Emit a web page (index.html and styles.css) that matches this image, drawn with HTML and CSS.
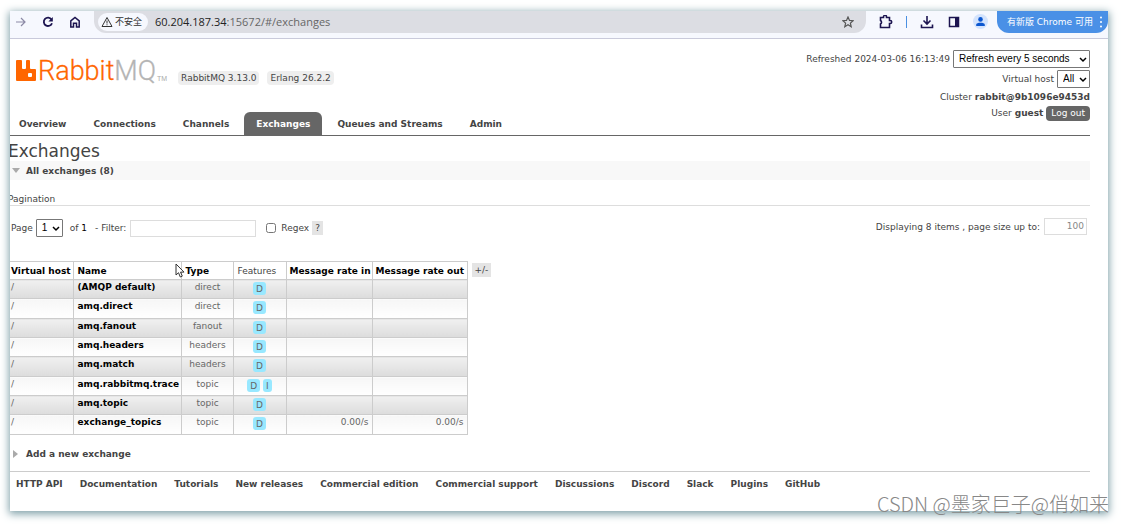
FILE: index.html
```html
<!DOCTYPE html>
<html lang="en">
<head>
<meta charset="utf-8">
<title>RabbitMQ Management</title>
<link rel="stylesheet" href="styles.css">
</head>
<body>
<div class="window">
  <div class="toolbar">
    <div class="nav-buttons">
      <button class="icon-button muted" aria-label="Forward"><svg viewBox="0 0 12 12"><path d="M1 6h9M6 2l4 4-4 4"/></svg></button>
      <button class="icon-button" aria-label="Reload"><svg viewBox="0 0 12 12"><path d="M9.5 3.4A4.2 4.2 0 1 0 10 7.2" stroke-width="1.8"/><path d="M10.8 1v4.4H6.4z" fill="currentColor" stroke="none"/></svg></button>
      <button class="icon-button" aria-label="Home"><svg viewBox="0 0 12 12"><path d="M1.8 4.8 6 1.4l4.2 3.4v6.1H7.5V7.2h-3v3.7H1.8z" stroke-width="1.5"/></svg></button>
    </div>
    <div class="address">
      <span class="security"><svg viewBox="0 0 12 12"><path d="M6 1.5 11 10.500H1z"/><path d="M6 4.500v3M6 8.300v1"/></svg>不安全</span>
      <span class="url"><b>60.204.187.34</b>:15672/#/exchanges</span>
      <button class="icon-button star" aria-label="Bookmark"><svg viewBox="0 0 12 12"><path d="m6 1 1.500 3.400 3.600.3-2.700 2.400.8 3.600L6 8.800l-3.200 1.900.8-3.600L.9 4.700l3.600-.3z"/></svg></button>
    </div>
    <button class="icon-button" aria-label="Extensions"><svg class="large" viewBox="0 0 14 14"><path d="M1.500 2.500h3V1.800a1.500 1.500 0 0 1 3 0v.7h3v3h.7a1.500 1.500 0 0 1 0 3h-.7v4h-9V9a2 2 0 0 0 0-3.500z" stroke-width="1.6"/></svg></button>
    <span class="divider"></span>
    <button class="icon-button" aria-label="Downloads"><svg class="large" viewBox="0 0 14 14"><path d="M7 1v8M3.500 5.500 7 9l3.500-3.500M1.500 9.500v3h11v-3" stroke-width="1.6"/></svg></button>
    <button class="icon-button panel" aria-label="Side panel"><svg viewBox="0 0 12 12"><path d="M1.500 1.500h9v9h-9z" stroke-width="1.500"/><path d="M7 1h4v10H7z" fill="currentColor" stroke="none"/></svg></button>
    <button class="icon-button avatar" aria-label="Profile"><svg viewBox="0 0 12 12"><circle cx="6" cy="3.700" r="2.500"/><path d="M1.300 11V9.500C1.300 6.800 10.700 6.800 10.700 9.500V11z"/></svg></button>
    <button class="update">有新版 Chrome 可用<svg viewBox="0 0 4 14"><circle cx="2" cy="2.500" r="1"/><circle cx="2" cy="7" r="1"/><circle cx="2" cy="11.500" r="1"/></svg></button>
  </div>

  <header class="header">
    <div class="brand">
      <a class="logo" href="#/" aria-label="RabbitMQ"><svg viewBox="0 0 20 21"><path d="M1 0h4q1 0 1 1v7q0 1 1 1h2q1 0 1-1V1q0-1 1-1h2q1 0 1 1v7q0 1 1 1h4q1 0 1 1v10q0 1-1 1H1q-1 0-1-1V1q0-1 1-1z"/><rect class="hole" x="12" y="13" width="4" height="4" rx="1"/></svg><span class="logo-name">Rabbit<span class="logo-mq">MQ</span></span><span class="logo-tm">TM</span></a>
      <span class="version">RabbitMQ 3.13.0</span>
      <span class="version">Erlang 26.2.2</span>
    </div>
    <div class="status">
      <div class="status-row first"><label for="refresh">Refreshed 2024-03-06 16:13:49</label><span class="select refresh"><select id="refresh"><option>Refresh every 5 seconds</option></select><svg viewBox="0 0 8 6"><path d="m1 1 3 3 3-3"/></svg></span></div>
      <div class="status-row second"><label for="vhost">Virtual host</label><span class="select vhost"><select id="vhost"><option>All</option></select><svg viewBox="0 0 8 6"><path d="m1 1 3 3 3-3"/></svg></span></div>
      <div class="status-row">Cluster <b>rabbit@9b1096e9453d</b></div>
      <div class="status-row">User <b>guest</b><button class="logout">Log out</button></div>
    </div>
    <nav class="tabs">
      <a href="#/">Overview</a><a href="#/connections">Connections</a><a href="#/channels">Channels</a><a class="selected" href="#/exchanges">Exchanges</a><a href="#/queues">Queues and Streams</a><a href="#/users">Admin</a>
    </nav>
  </header>

  <main class="main">
    <h1>Exchanges</h1>
    <h2 class="section open"><svg viewBox="0 0 8 6"><path d="M0 0h8L4 5z"/></svg>All exchanges (8)</h2>
    <h3>Pagination</h3>
    <div class="filters">
      <label for="page">Page</label>
      <span class="select page"><select id="page"><option>1</option></select><svg viewBox="0 0 8 6"><path d="m1 1 3 3 3-3"/></svg></span>
      <span class="count">of <span class="total">1</span></span>
      <label for="filter">- Filter:</label>
      <input class="filter" id="filter" type="text">
      <input class="regex" id="regex" type="checkbox">
      <label for="regex">Regex</label>
      <button class="help">?</button>
      <span class="page-size"><label for="size">Displaying 8 items , page size up to:</label><input id="size" type="text" value="100"></span>
    </div>

    <div class="listing">
      <table>
        <colgroup><col class="c-host"><col class="c-name"><col class="c-type"><col class="c-features"><col class="c-in"><col class="c-out"></colgroup>
        <thead><tr><th>Virtual host</th><th>Name</th><th>Type</th><th class="plain">Features</th><th>Message rate in</th><th>Message rate out</th></tr></thead>
        <tbody>
          <tr><td>/</td><td><a href="#/e/default">(AMQP default)</a></td><td>direct</td><td><abbr>D</abbr></td><td></td><td></td></tr>
          <tr><td>/</td><td><a href="#/e/direct">amq.direct</a></td><td>direct</td><td><abbr>D</abbr></td><td></td><td></td></tr>
          <tr><td>/</td><td><a href="#/e/fanout">amq.fanout</a></td><td>fanout</td><td><abbr>D</abbr></td><td></td><td></td></tr>
          <tr><td>/</td><td><a href="#/e/headers">amq.headers</a></td><td>headers</td><td><abbr>D</abbr></td><td></td><td></td></tr>
          <tr><td>/</td><td><a href="#/e/match">amq.match</a></td><td>headers</td><td><abbr>D</abbr></td><td></td><td></td></tr>
          <tr><td>/</td><td><a href="#/e/trace">amq.rabbitmq.trace</a></td><td>topic</td><td><abbr>D</abbr> <abbr>I</abbr></td><td></td><td></td></tr>
          <tr><td>/</td><td><a href="#/e/topic">amq.topic</a></td><td>topic</td><td><abbr>D</abbr></td><td></td><td></td></tr>
          <tr><td>/</td><td><a href="#/e/exchange_topics">exchange_topics</a></td><td>topic</td><td><abbr>D</abbr></td><td>0.00/s</td><td>0.00/s</td></tr>
        </tbody>
      </table>
      <button class="columns">+/-</button>
      <svg class="cursor" viewBox="0 0 10 15"><path d="M1 1v11l2.500-2.300L5.300 14l2-.9-1.800-4H9z"/></svg>
    </div>
    <h2 class="section"><svg viewBox="0 0 8 8"><path d="M1 0v8l5-4z"/></svg>Add a new exchange</h2>
  </main>

  <footer class="footer">
    <a href="#api">HTTP API</a><a href="#docs">Documentation</a><a href="#tutorials">Tutorials</a><a href="#releases">New releases</a><a href="#edition">Commercial edition</a><a href="#support">Commercial support</a><a href="#discussions">Discussions</a><a href="#discord">Discord</a><a href="#slack">Slack</a><a href="#plugins">Plugins</a><a href="#github">GitHub</a>
  </footer>
</div>
<div class="watermark">CSDN @墨家巨子@俏如来</div>
</body>
</html>
```

FILE: styles.css
```css
* { box-sizing: border-box; }

body {
  margin: 0;
  padding: 11px 16px 13px 10px;
  background: #fff;
  color: #444;
  font: 9px/12px "DejaVu Sans", Verdana, "Noto Sans CJK SC", sans-serif;
  position: relative;
}

button, input, select { font: inherit; color: inherit; margin: 0; }
button { border: 0; padding: 0; background: none; }
a { color: inherit; text-decoration: none; font-weight: bold; }
svg { display: block; }

.window {
  min-height: 500px;
  overflow: hidden;
  background: #fff;
}
body::before {
  content: "";
  position: absolute;
  inset: 11px 16px 13px 10px;
  box-shadow: 0 2px 8px 1px #7fa0a8;
  z-index: -1;
}

/* Browser toolbar */
.toolbar {
  display: flex;
  align-items: center;
  height: 28px;
  padding-bottom: 6px;
  background: #f6f8fe;
  border-bottom: 1px solid #c9cadb;
}
.nav-buttons { display: flex; gap: 15px; padding-left: 5px; }
.icon-button { color: #1c1450; }
.icon-button svg { width: 12px; height: 12px; fill: none; stroke: currentColor; stroke-width: 1.2; }
.icon-button svg.large { width: 14px; height: 14px; }
.icon-button.muted { color: #8c8aa6; }
.address {
  flex: 1;
  display: flex;
  align-items: center;
  height: 23px;
  margin: 0 13px 0 13px;
  padding: 0 12px 0 4px;
  background: #dcdde3;
  border-radius: 0 0 12px 12px;
}
.security {
  display: flex;
  align-items: center;
  gap: 2px;
  height: 18px;
  padding: 0 6px 0 3px;
  border-radius: 9px;
  background: #f6f8fe;
  color: #333;
}
.security svg { width: 12px; height: 12px; fill: none; stroke: #333; }
.url { flex: 1; padding-left: 7px; font: 11px/14px "Open Sans", sans-serif; color: #666; }
.url b { font-weight: normal; color: #222; }
.icon-button.star { color: #555; }
.divider { width: 1px; height: 12px; margin: 0 13px 0 13px; background: #4a90e2; }
.icon-button.panel { margin-left: 14px; }
.icon-button.avatar {
  display: grid;
  place-items: center;
  width: 15px;
  height: 15px;
  margin: 0 9px 0 13px;
  border-radius: 50%;
  background: #d3e3fd;
  color: #0b57d0;
}
.avatar svg { width: 11px; height: 11px; fill: currentColor; stroke: none; }
.update {
  display: flex;
  align-items: center;
  gap: 6px;
  height: 23px;
  padding: 0 5px 0 10px;
  border-radius: 0 0 12px 12px;
  background: #4a90e6;
  color: #fff;
}
.update svg { width: 4px; height: 14px; fill: #fff; }

/* Page header */
.header {
  display: grid;
  grid-template-columns: 1fr auto;
  margin-right: 18px;
  height: 97px;
  border-bottom: 1px solid #666;
}
.brand { display: flex; align-items: flex-start; padding: 18px 0 0 6px; }
.logo { display: flex; margin-right: 11px; font-weight: normal; }
.logo svg { width: 20px; height: 21px; margin-top: 3px; fill: #f60; }
.logo .hole { fill: #fff; }
.logo-name { margin-left: 2px; font: 27px/29px Roboto, sans-serif; font-weight: 300; color: #f60; -webkit-text-stroke: 0.3px; }
.logo-mq { color: #b4b4b4; }
.logo-tm { margin: 18px 0 0 1px; font: 7px/8px "Liberation Sans", sans-serif; color: #aaa; }
.version {
  margin: 14px 8px 0 0;
  padding: 1px 3px;
  border-radius: 4px;
  background: #eee;
}
.status { grid-row: span 2; padding-top: 10px; }
.status-row {
  display: flex;
  align-items: center;
  justify-content: flex-end;
  gap: 3px;
  height: 16px;
}
.status-row.first { height: 19px; }
.status-row.second { height: 21px; }
.select { position: relative; display: inline-flex; }
.select select {
  width: 100%;
  height: 18px;
  padding: 0 5px;
  appearance: none;
  border: 1px solid #777;
  border-radius: 1px;
  background: #fff;
  color: #000;
  font: 10px/14px "Liberation Sans", Arial, sans-serif;
}
.select svg {
  position: absolute;
  right: 3px;
  top: 7px;
  width: 8px;
  height: 6px;
  fill: none;
  stroke: #000;
  stroke-width: 1.5;
  pointer-events: none;
}
.refresh { width: 137px; }
.vhost { width: 33px; }
.logout {
  height: 15px;
  padding: 0 5px;
  border-radius: 4px;
  background: #666;
  color: #fff;
}
.tabs { display: flex; align-items: flex-end; gap: 3px; margin-left: -3px; }
.tabs a { height: 23px; padding: 6px 12px 5px; border-radius: 6px 6px 0 0; }
.tabs .selected { background: #666; color: #fff; }

/* Content */
.main { margin-right: 18px; }
h1, h2, h3 { margin: 0; font-weight: normal; }
h1 { margin-left: -2px; padding-top: 5px; font-size: 17px; line-height: 20px; }
.section {
  display: flex;
  align-items: center;
  gap: 6px;
  height: 19px;
  padding-left: 2px;
  font-size: 9px;
  font-weight: bold;
}
.section svg { width: 8px; height: 8px; fill: #aaa; }
.section.open { background: #f8f8f8; }
h3 {
  height: 26px;
  margin-left: -2px;
  padding-top: 13px;
  font-size: 9px;
  border-bottom: 1px solid #ddd;
}
.filters { display: flex; align-items: center; height: 44px; padding-left: 1px; }
.filters .page { width: 27px; margin: 0 7px 0 3px; }
.count { margin-right: 8px; }
.total { color: #000; }
.filters input[type="text"] { height: 17px; border: 1px solid #ddd; background: #fff; }
.filter { width: 126px; margin: 0 10px 0 4px; }
.regex { width: 10px; height: 10px; margin-right: 5px; }
.help, .columns { height: 14px; padding: 0 3px; background: #e4e4e4; }
.help { margin-left: 3px; }
.page-size { margin: 0 3px 4px auto; }
.page-size input { width: 43px; margin-left: 4px; padding: 0 2px; text-align: right; color: #888; }

/* Exchange table */
.listing { position: relative; display: flex; align-items: flex-start; gap: 4px; padding: 11px 0 9px; }
table { table-layout: fixed; width: 457px; border-collapse: collapse; }
.c-host { width: 63px; }
.c-name { width: 108px; }
.c-type { width: 52px; }
.c-features { width: 53px; }
.c-in { width: 86px; }
.c-out { width: 95px; }
th, td { padding: 0 3px 0 4px; border: 1px solid #ccc; text-align: center; white-space: nowrap; }
th:first-child, td:first-child { padding-left: 1px; border-left: 0; text-align: left; }
th { height: 18px; color: #000; text-align: left; }
th:nth-child(n+5) { padding-left: 3px; padding-right: 0; }
th.plain { font-weight: normal; color: #444; }
td { height: 19px; padding-bottom: 5px; color: #666; }
tr:nth-child(3n+2) td { height: 20px; }
tr:nth-child(odd) td { background: linear-gradient(#f0f0f0, #dcdcdc); }
tr:nth-child(even) td { background: linear-gradient(#f6f6f6, #fff); }
td:nth-child(2) { text-align: left; }
td a { color: #000; }
tr td:nth-child(4) { padding: 0 0 2px; }
td:nth-child(n+5) { text-align: right; }
abbr {
  display: inline-block;
  padding: 1px 3px 0;
  border-radius: 3px;
  background: #98e8ff;
}
.columns { margin-top: 2px; }
.cursor { position: absolute; left: 165px; top: 13px; width: 10px; height: 15px; fill: #fff; stroke: #333; }

.footer {
  display: flex;
  gap: 17px;
  margin: 8px 18px 0 0;
  padding: 6px 6px 0;
  border-top: 1px solid #ccc;
}
.watermark {
  position: absolute;
  right: 15px;
  bottom: 8px;
  font: 300 20px/24px "Noto Sans CJK SC Light", "Noto Sans CJK SC", sans-serif;
  color: #888;
}
```
